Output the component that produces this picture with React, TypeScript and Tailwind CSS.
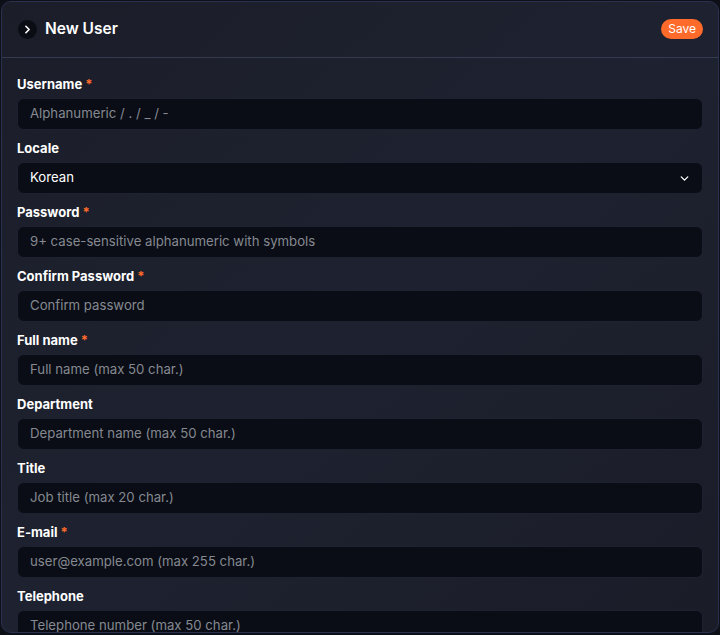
import React from 'react';
import { ChevronRight, ChevronDown } from 'lucide-react';

const fields = [
  { label: 'Username', required: true, placeholder: 'Alphanumeric / . / _ / -' },
  { label: 'Locale', required: false, select: 'Korean' },
  { label: 'Password', required: true, placeholder: '9+ case-sensitive alphanumeric with symbols' },
  { label: 'Confirm Password', required: true, placeholder: 'Confirm password' },
  { label: 'Full name', required: true, placeholder: 'Full name (max 50 char.)' },
  { label: 'Department', required: false, placeholder: 'Department name (max 50 char.)' },
  { label: 'Title', required: false, placeholder: 'Job title (max 20 char.)' },
  { label: 'E-mail', required: true, placeholder: 'user@example.com (max 255 char.)' },
  { label: 'Telephone', required: false, placeholder: 'Telephone number (max 50 char.)' },
];

export default function App() {
  return (
    <div className="h-[635px] w-[720px] overflow-hidden bg-[#0e1017] font-['Inter',sans-serif]">
      <div className="m-px h-[632px] overflow-hidden rounded-[10px] border border-[#2a3050] bg-gradient-to-br from-[#1b1e29] via-[#1e2230] to-[#1a1d28]">
        <div className="flex h-[56px] items-center justify-between border-b border-[#343a52] pl-[16px] pr-[15px]">
          <div className="flex items-center gap-[8px]">
            <div className="flex h-[19px] w-[19px] items-center justify-center rounded-full bg-[#0b0d14]">
              <ChevronRight className="h-[13px] w-[13px] text-white" strokeWidth={3} />
            </div>
            <span className="mb-[2px] text-[15.5px] font-semibold text-white">New User</span>
          </div>
          <button className="mb-px flex h-[20px] items-center rounded-full bg-[#fd6a2a] px-[7px] text-[12px] text-white">
            Save
          </button>
        </div>
        <div className="flex flex-col gap-[8px] pl-[15px] pr-[15px] pt-[16px]">
          {fields.map((f) => (
            <div key={f.label} className="flex flex-col gap-[4px]">
              <div className="flex h-[20px] items-center pt-[2px] text-[13px] font-bold text-white">
                {f.label}
                {f.required && <span className="ml-[3px] text-[#ff6a2a]">*</span>}
              </div>
              {f.select ? (
                <div className="flex h-[32px] items-center justify-between rounded-[7px] border border-[#1d2130] bg-[#0a0d15] pl-[12px] pr-[11px] text-[13.2px] text-white">
                  {f.select}
                  <ChevronDown className="h-[13px] w-[13px] text-white" strokeWidth={2.5} />
                </div>
              ) : (
                <div className="flex h-[32px] items-center rounded-[7px] border border-[#1d2130] bg-[#0a0d15] pl-[12px] text-[13.2px] text-[#858991]">
                  {f.placeholder}
                </div>
              )}
            </div>
          ))}
        </div>
      </div>
    </div>
  );
}
